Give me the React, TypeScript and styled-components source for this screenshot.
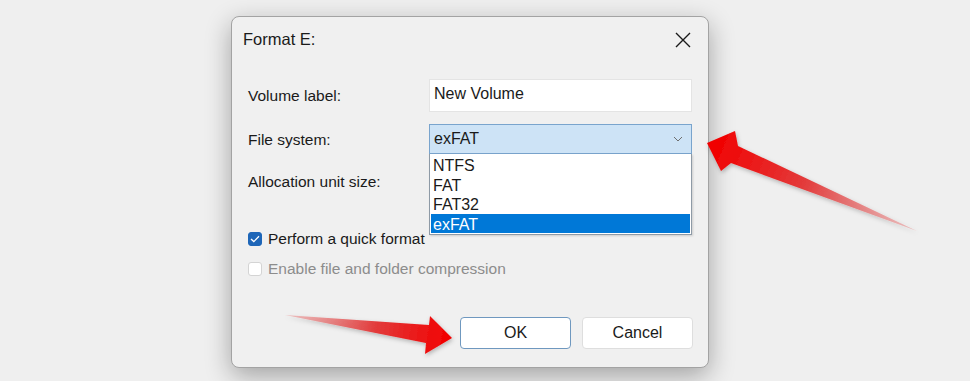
import React from 'react'
import styled, { createGlobalStyle } from 'styled-components'

const GlobalStyle = createGlobalStyle`
    html, body {
        margin: 0;
        padding: 0;
        background: #efefef;
    }
    body {
        font-family: "Liberation Sans", Arial, sans-serif;
        color: #1a1a1a;
    }
`

const Page = styled.div`
    position: relative;
    width: 970px;
    height: 381px;
    overflow: hidden;
    padding: 16px 0 0 231px;
    box-sizing: border-box;
`

const Dialog = styled.div`
    width: 478px;
    height: 352px;
    box-sizing: border-box;
    background: #f0f0f0;
    border: 1px solid #a3a3a3;
    border-radius: 8px;
    box-shadow: 0 8px 26px rgba(0, 0, 0, 0.32);
    display: flex;
    flex-direction: column;
`

const TitleBar = styled.div`
    height: 45px;
    display: flex;
    align-items: center;
    justify-content: space-between;
    padding: 0 15px 0 11px;
`

const Title = styled.h1`
    margin: 0;
    font-size: 16.5px;
    font-weight: 400;
    color: #1a1a1a;
`

const CloseButton = styled.button`
    border: none;
    background: transparent;
    padding: 0;
    width: 20px;
    height: 20px;
    display: flex;
    align-items: center;
    justify-content: center;
`

const Body = styled.div`
    flex: 1;
    display: flex;
    flex-direction: column;
    padding: 17px 15px 18px 16px;
`

const FieldGrid = styled.div`
    display: grid;
    grid-template-columns: 181px 263px;
    grid-template-rows: 33px 30px 30px;
    row-gap: 12px;
    align-items: center;
`

const Label = styled.label`
    font-size: 15.5px;
    color: #1a1a1a;
    padding-top: 1px;
`

const TextInput = styled.div`
    height: 33px;
    box-sizing: border-box;
    background: #ffffff;
    border: 1px solid #e4e4e4;
    padding: 5px 4px 0;
    font-size: 16px;
`

const SelectWrap = styled.div`
    position: relative;
    height: 30px;
`

const Select = styled.div<{ $open?: boolean }>`
    height: 30px;
    box-sizing: border-box;
    background: ${p => (p.$open ? '#cde3f6' : '#ffffff')};
    border: 1px solid ${p => (p.$open ? '#79a4cd' : '#d6d6d6')};
    display: flex;
    align-items: center;
    justify-content: space-between;
    padding: 0 8px 0 4px;
    font-size: 16px;
`

const List = styled.ul`
    position: absolute;
    z-index: 2;
    top: 30px;
    left: 0;
    width: 263px;
    box-sizing: border-box;
    margin: 0;
    padding: 1px 1px 1px 1px;
    list-style: none;
    background: #ffffff;
    border: 1px solid #8e9aa6;
    border-top: none;
    box-shadow: 1px 1px 2px rgba(0, 0, 0, 0.15);
`

const Item = styled.li<{ $selected?: boolean }>`
    height: 19.5px;
    line-height: 21px;
    padding-left: 2px;
    font-size: 16px;
    background: ${p => (p.$selected ? '#0078d7' : 'transparent')};
    color: ${p => (p.$selected ? '#ffffff' : '#1a1a1a')};
`

const Options = styled.div`
    display: flex;
    flex-direction: column;
    gap: 10px;
    margin-top: 33px;
`

const CheckRow = styled.div<{ $disabled?: boolean }>`
    height: 20px;
    display: flex;
    align-items: center;
    gap: 6px;
    font-size: 15.5px;
    color: ${p => (p.$disabled ? '#8c8c8c' : '#1a1a1a')};
`

const Box = styled.span<{ $checked?: boolean }>`
    width: 14px;
    height: 14px;
    box-sizing: border-box;
    border-radius: 3px;
    display: flex;
    align-items: center;
    justify-content: center;
    background: ${p => (p.$checked ? '#1e66b8' : '#ffffff')};
    border: 1px solid ${p => (p.$checked ? '#1e66b8' : '#d4d4d4')};
`

const Buttons = styled.div`
    margin-top: auto;
    display: flex;
    justify-content: flex-end;
    gap: 11px;
`

const Button = styled.button<{ $primary?: boolean }>`
    width: 111px;
    height: 32px;
    box-sizing: border-box;
    background: #ffffff;
    border: 1px solid ${p => (p.$primary ? '#6f98bf' : '#dedede')};
    border-radius: 4px;
    font-family: "Liberation Sans", Arial, sans-serif;
    font-size: 16px;
    color: #1a1a1a;
`

const Overlay = styled.svg`
    position: absolute;
    left: 0;
    top: 0;
    pointer-events: none;
`

const Chevron = () => (
    <svg width="10" height="6" viewBox="0 0 10 6">
        <path d="M1 1 L5 5 L9 1" fill="none" stroke="#6f6f6f" strokeWidth="1" />
    </svg>
)

const Check = () => (
    <svg width="10" height="8" viewBox="0 0 10 8">
        <path d="M1 4 L3.8 6.6 L9 1.2" fill="none" stroke="#ffffff" strokeWidth="1.3" />
    </svg>
)

const Arrows = () => (
    <Overlay width="970" height="381" viewBox="0 0 970 381">
        <defs>
            <linearGradient id="g1" gradientUnits="userSpaceOnUse" x1="917" y1="231" x2="712" y2="146">
                <stop offset="0" stopColor="#e9a0a0" stopOpacity="0.6" />
                <stop offset="0.55" stopColor="#e33b3b" />
                <stop offset="1" stopColor="#f10000" />
            </linearGradient>
            <linearGradient id="g2" gradientUnits="userSpaceOnUse" x1="285" y1="315" x2="450" y2="338">
                <stop offset="0" stopColor="#eaa0a0" stopOpacity="0.6" />
                <stop offset="0.55" stopColor="#e23a3a" />
                <stop offset="1" stopColor="#f20000" />
            </linearGradient>
            <filter id="sh" x="-20%" y="-20%" width="140%" height="140%">
                <feDropShadow dx="1" dy="2" stdDeviation="2" floodColor="#000" floodOpacity="0.25" />
            </filter>
        </defs>
        <polygon
            points="707,143 735,131 738,146 917,231 731,163 721,171"
            fill="url(#g1)"
            filter="url(#sh)"
        />
        <polygon
            points="285,315 429,325 430,316 452,338 425,354 426,343"
            fill="url(#g2)"
            filter="url(#sh)"
        />
    </Overlay>
)

const fileSystems = ['NTFS', 'FAT', 'FAT32', 'exFAT']

export default function App() {
    return (
        <>
            <GlobalStyle />
            <Page>
                <Dialog>
                    <TitleBar>
                        <Title>Format E:</Title>
                        <CloseButton aria-label="Close">
                            <svg width="16" height="16" viewBox="0 0 16 16">
                                <path d="M1 1 L15 15 M15 1 L1 15" stroke="#1a1a1a" strokeWidth="1.4" />
                            </svg>
                        </CloseButton>
                    </TitleBar>
                    <Body>
                        <FieldGrid>
                            <Label>Volume label:</Label>
                            <TextInput>New Volume</TextInput>
                            <Label>File system:</Label>
                            <SelectWrap>
                                <Select $open>
                                    <span>exFAT</span>
                                    <Chevron />
                                </Select>
                                <List>
                                    {fileSystems.map(fs => (
                                        <Item key={fs} $selected={fs === 'exFAT'}>{fs}</Item>
                                    ))}
                                </List>
                            </SelectWrap>
                            <Label>Allocation unit size:</Label>
                            <SelectWrap>
                                <Select>
                                    <span />
                                    <Chevron />
                                </Select>
                            </SelectWrap>
                        </FieldGrid>
                        <Options>
                            <CheckRow>
                                <Box $checked><Check /></Box>
                                Perform a quick format
                            </CheckRow>
                            <CheckRow $disabled>
                                <Box />
                                Enable file and folder compression
                            </CheckRow>
                        </Options>
                        <Buttons>
                            <Button $primary>OK</Button>
                            <Button>Cancel</Button>
                        </Buttons>
                    </Body>
                </Dialog>
                <Arrows />
            </Page>
        </>
    )
}
